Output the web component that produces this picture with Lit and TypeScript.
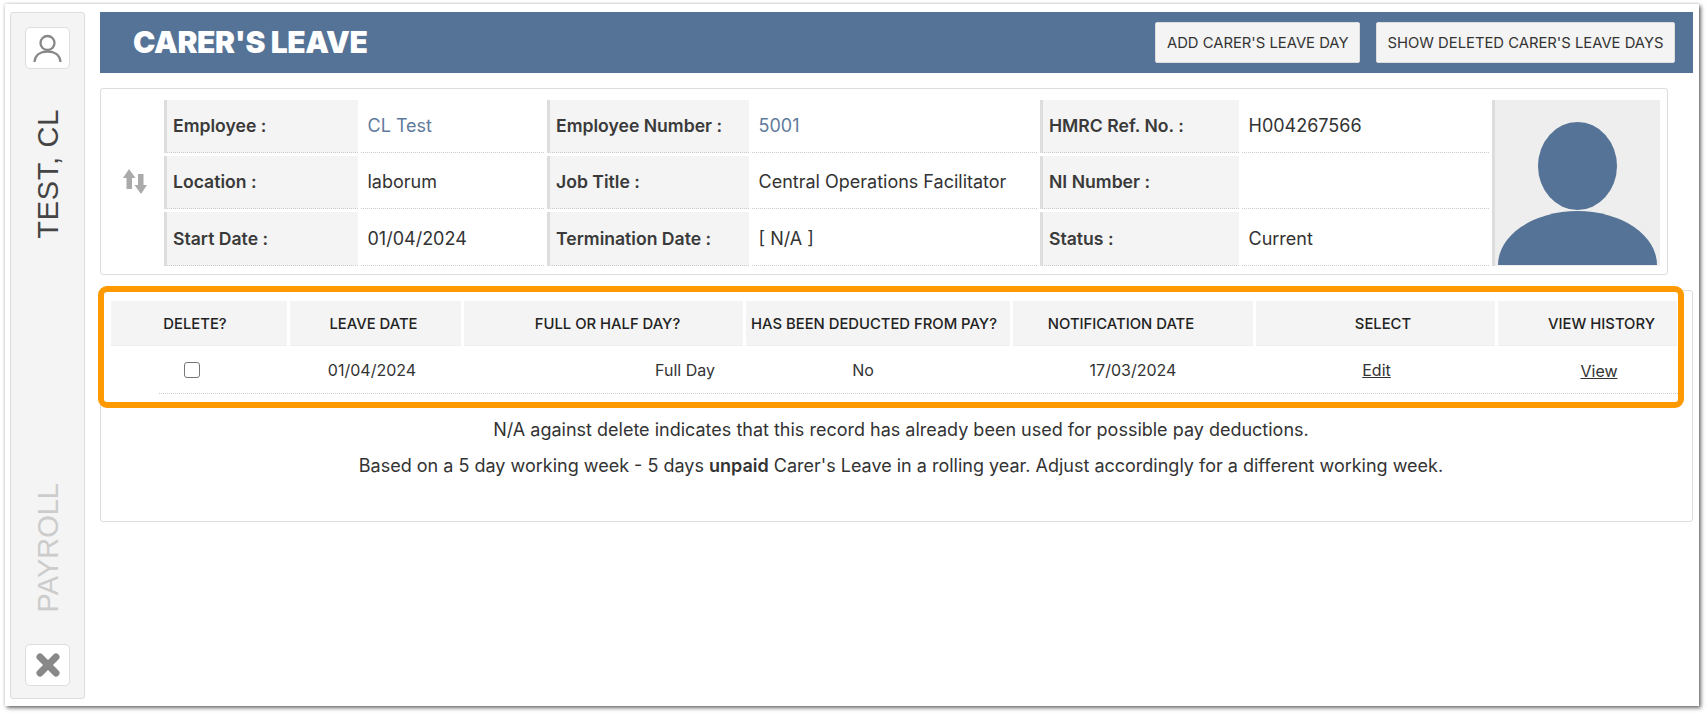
import { LitElement, html, css } from "lit";
import { customElement } from "lit/decorators.js";

const rows = [
  [
    ["Employee :", "CL Test", true],
    ["Employee Number :", "5001", true],
    ["HMRC Ref. No. :", "H004267566", false],
  ],
  [
    ["Location :", "laborum", false],
    ["Job Title :", "Central Operations Facilitator", false],
    ["NI Number :", "", false],
  ],
  [
    ["Start Date :", "01/04/2024", false],
    ["Termination Date :", "[ N/A ]", false],
    ["Status :", "Current", false],
  ],
] as [string, string, boolean][][];

const heads = ["DELETE?", "LEAVE DATE", "FULL OR HALF DAY?", "HAS BEEN DEDUCTED FROM PAY?", "NOTIFICATION DATE", "SELECT", "VIEW HISTORY"];

@customElement("app-root")
export class AppRoot extends LitElement {
  static styles = css`
    :host { display: block; width: 1708px; height: 715px; background: #fff; font-family: Inter, "Noto Sans", sans-serif; color: #333; overflow: hidden; }
    * { box-sizing: border-box; }
    .window { margin: 4px 0 0 5px; width: 1694px; height: 702px; background: #fff; box-shadow: 2px 2px 4px rgba(0,0,0,.55), 0 0 3px rgba(0,0,0,.2); display: flex; gap: 15px; padding: 8px 6px 7px 5px; }
    .side { width: 75px; flex: none; background: #f4f4f4; border: 1px solid #ddd; border-radius: 3px; display: flex; flex-direction: column; align-items: center; padding: 14px 0 12px; }
    .iconbtn { width: 45px; height: 42px; flex: none; background: #fff; border: 1px solid #ddd; border-radius: 5px; display: flex; align-items: center; justify-content: center; }
    .vert { writing-mode: vertical-rl; transform: rotate(180deg); font-family: "Liberation Sans", Arial, sans-serif; font-size: 29px; line-height: 34px; white-space: nowrap; }
    .name { margin-top: 40px; color: #444; letter-spacing: 0.7px; }
    .mod { margin-top: auto; margin-bottom: 32px; color: #ccc; }
    .main { flex: 1; min-width: 0; display: flex; flex-direction: column; }
    .hdr { height: 61px; background: #557396; display: flex; align-items: center; padding: 0 18px 0 33px; gap: 16px; }
    .hdr h1 { margin: 0 auto 2px 0; font-size: 30px; font-weight: 900; color: #fff; letter-spacing: -0.4px; line-height: 1; }
    .btn { height: 41px; display: flex; align-items: center; padding: 0 10.500px; background: #f4f4f4; border: 1px solid #ddd; border-radius: 2px; font-size: 14.800px; color: #333; white-space: nowrap; }
    .card { width: 1568px; height: 187px; margin-top: 15px; background: #fff; border: 1px solid #ddd; border-radius: 3px; padding: 11px 7px 0 0; display: grid; grid-template-columns: 60px 194px 183px 202px 285px 199px 247px 168px; grid-template-rows: 53px 53px 54px; gap: 3px; }
    .arrows { grid-row: 1 / 4; display: flex; align-items: center; justify-content: center; margin-right: -5px; padding: 0 0 4px 2px; }
    .l, .v { display: flex; align-items: center; font-size: 17.600px; border-bottom: 1px dotted #ccc; white-space: nowrap; padding-bottom: 1px; }
    .l { background: #f4f4f4; border-left: 3px solid #ddd; padding-left: 6px; font-weight: 600; color: #3a3a3a; }
    .v { padding-left: 6.500px; font-size: 18px; color: #333; }
    .v.link { color: #5f7a9c; }
    .photo { grid-row: 1 / 4; grid-column: 8; background: #eee; border-left: 3px solid #ddd; display: flex; align-items: flex-end; }
    .photo svg { display: block; }
    .list { position: relative; flex: none; height: 232px; width: 1593px; margin-top: 15px; border: 1px solid #ddd; border-radius: 3px; padding: 10px 14px 0 10px; }
    .hl { position: absolute; left: -3px; top: -5px; width: 1586px; height: 122px; border: 6px solid #f90; border-radius: 9px; pointer-events: none; }
    .heads { display: grid; grid-template-columns: 176px 171px 279px 264px 240px 239px 179px; column-gap: 3px; height: 45px; }
    .heads div { background: #f4f4f4; border-bottom: 1px solid #eee; display: flex; align-items: center; justify-content: center; padding-top: 1px; font-size: 14.800px; font-weight: 500; color: #222; white-space: nowrap; }
    .heads div:nth-child(1) { padding-right: 8px; }
    .heads div:nth-child(2) { padding-right: 4px; }
    .heads div:nth-child(3) { padding-left: 8px; }
    .heads div:nth-child(4) { padding-right: 8px; }
    .heads div:nth-child(5) { padding-right: 24px; }
    .heads div:nth-child(6) { padding-left: 15px; }
    .heads div:nth-child(7) { padding-left: 28px; }
    .row { display: grid; grid-template-columns: 66px 294px 246px 196px 344px 157px 215px; margin-left: 48px; height: 48px; border-bottom: 1px dotted #ccc; font-size: 16px; align-items: center; text-align: center; color: #333; }
    .row a { color: #333; text-decoration: underline; }
    .cb { width: 16px; height: 16px; border: 1px solid #767676; border-radius: 3px; background: #fff; margin: 0 auto; display: block; appearance: none; }
    .fd { text-align: right; padding-right: 50px; }
    .ed { padding-right: 14px; }
    .vw { padding-left: 59px; padding-top: 2px; }
    .notes { margin-top: 24px; padding-left: 13px; text-align: center; font-size: 18px; color: #333; line-height: 24px; }
    .notes p { margin: 0 0 12px; }
    .notes b { font-weight: 600; }
  `;

  render() {
    return html`
      <div class="window">
        <aside class="side">
          <div class="iconbtn">
            <svg width="30" height="30" viewBox="0 0 30 30" fill="none" stroke="#888" stroke-width="2.300"><circle cx="14.500" cy="10" r="7"/><path d="M1.500 29C2 21.500 8 18.500 14.500 18.500S27 21.500 27.500 29"/></svg>
          </div>
          <div class="vert name">TEST, CL</div>
          <div class="vert mod">PAYROLL</div>
          <div class="iconbtn">
            <svg width="26" height="26" viewBox="0 0 26 26" fill="none" stroke="#888" stroke-width="7" stroke-linecap="round"><path d="M5 5l16 16M21 5L5 21"/></svg>
          </div>
        </aside>
        <div class="main">
          <header class="hdr">
            <h1>CARER'S LEAVE</h1>
            <div class="btn">ADD CARER'S LEAVE DAY</div>
            <div class="btn">SHOW DELETED CARER'S LEAVE DAYS</div>
          </header>
          <section class="card">
            <div class="arrows">
              <svg width="24" height="25" viewBox="0 0 24 25" fill="#aaa"><path d="M6 0l6.500 9H9v11H3.500V9H0z"/><path d="M15 5h5.500v11H24l-6 9-6.500-9H15z"/></svg>
            </div>
            ${rows.map((r) => html`${r.map(([l, v, link]) => html`<div class="l">${l}</div><div class="v ${link ? "link" : ""}">${v}</div>`)}`)}
            <div class="photo">
              <svg width="165" height="165" viewBox="0 0 165 165">
                <ellipse cx="82.500" cy="65" rx="39.500" ry="44" fill="#557396"/>
                <path d="M3 164A79.500 54 0 0 1 162 164z" fill="#557396"/>
              </svg>
            </div>
          </section>
          <section class="list">
            <div class="heads">${heads.map((h) => html`<div>${h}</div>`)}</div>
            <div class="row">
              <div><input class="cb" type="checkbox" /></div>
              <div>01/04/2024</div>
              <div class="fd">Full Day</div>
              <div>No</div>
              <div>17/03/2024</div>
              <div class="ed"><a href="#">Edit</a></div>
              <div class="vw"><a href="#">View</a></div>
            </div>
            <div class="hl"></div>
            <div class="notes">
              <p>N/A against delete indicates that this record has already been used for possible pay deductions.</p>
              <p>Based on a 5 day working week - 5 days <b>unpaid</b> Carer's Leave in a rolling year. Adjust accordingly for a different working week.</p>
            </div>
          </section>
        </div>
      </div>
    `;
  }
}
